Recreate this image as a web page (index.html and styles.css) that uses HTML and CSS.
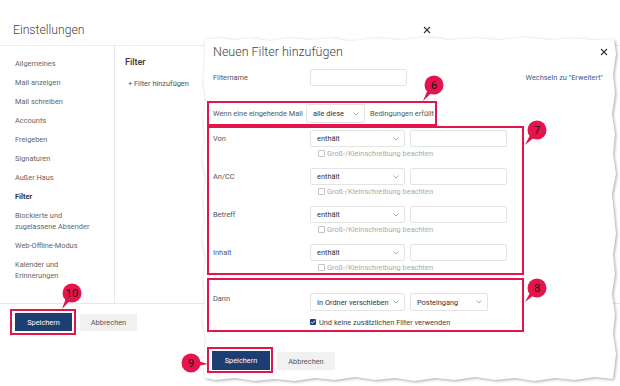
FILE: index.html
```html
<!DOCTYPE html>
<html lang="de">
<head>
<meta charset="utf-8">
<title>Einstellungen – Filter</title>
<link rel="stylesheet" href="styles.css">
</head>
<body>
<div class="page">
  <header class="top">
    <h1 class="page-title">Einstellungen</h1>
    <svg class="x-icon" viewBox="0 0 8 8"><path d="M1 1L7 7M7 1L1 7" stroke="#333" stroke-width="1.1" fill="none"/></svg>
  </header>
  <div class="main">
    <nav class="nav">
      <div class="nav-item">Allgemeines</div>
      <div class="nav-item">Mail anzeigen</div>
      <div class="nav-item">Mail schreiben</div>
      <div class="nav-item">Accounts</div>
      <div class="nav-item">Freigeben</div>
      <div class="nav-item">Signaturen</div>
      <div class="nav-item">Außer Haus</div>
      <div class="nav-item active">Filter</div>
      <div class="nav-item">Blockierte und<br>zugelassene Absender</div>
      <div class="nav-item">Web-Offline-Modus</div>
      <div class="nav-item">Kalender und<br>Erinnerungen</div>
    </nav>
    <section class="filters">
      <h2 class="filters-title">Filter</h2>
      <div class="add-link">+ Filter hinzufügen</div>
    </section>
  </div>
  <footer class="foot">
    <div class="hl-box"><div class="btn primary">Speichern</div></div>
    <div class="btn secondary">Abbrechen</div>
  </footer>
</div>

<div class="dialog">
  <svg class="paper" viewBox="0 0 420 352" width="420" height="352">
    <path fill="#fff" d="M5 5 L20 4 L35 6 L50 4 L70 7 L90 4 L110 6 L130 4 L150 7 L175 4 L200 6 L225 3 L250 6 L275 4 L300 6 L325 3 L350 6 L375 4 L395 6 L414 5 L416 20 L413 40 L415 60 L412 80 L415 100 L413 120 L416 140 L412 160 L414 180 L416 200 L413 220 L415 240 L412 260 L415 280 L413 300 L416 320 L413 345 L395 343 L375 346 L355 344 L335 347 L315 344 L295 346 L275 343 L255 346 L235 344 L215 347 L195 344 L175 346 L155 343 L135 346 L115 344 L95 347 L75 345 L55 347 L35 344 L15 346 L5 344 L3 325 L6 305 L2 285 L5 265 L3 245 L6 225 L2 205 L5 185 L3 165 L6 145 L2 125 L5 105 L3 85 L6 65 L3 45 L5 25 Z"/>
  </svg>
  <div class="dlg-body">
    <div class="dlg-head">
      <h2 class="dlg-title">Neuen Filter hinzufügen</h2>
      <svg class="x-icon" viewBox="0 0 8 8"><path d="M1 1L7 7M7 1L1 7" stroke="#333" stroke-width="1.1" fill="none"/></svg>
    </div>
    <div class="name-row">
      <span class="lbl">Filtername</span>
      <div class="input w97"></div>
      <span class="adv-link">Wechseln zu "Erweitert"</span>
    </div>
    <div class="box box-when">
      <span class="lbl lbl-when">Wenn eine eingehende Mail</span>
      <div class="sel w59"><span>alle diese</span><svg class="chev" viewBox="0 0 6 4"><path d="M0.5 0.5L3 3L5.5 0.5" fill="none" stroke="#999" stroke-width="0.8"/></svg></div>
      <span class="after">Bedingungen erfüllt</span>
    </div>
    <div class="box box-cond">
      <div class="crow">
        <div class="line"><span class="lbl">Von</span><div class="sel w95"><span>enthält</span><svg class="chev" viewBox="0 0 6 4"><path d="M0.5 0.5L3 3L5.5 0.5" fill="none" stroke="#999" stroke-width="0.8"/></svg></div><div class="input w97 ml5"></div></div>
        <div class="cb-line"><span class="cb"></span><span class="cb-text">Groß-/Kleinschreibung beachten</span></div>
      </div>
      <div class="crow">
        <div class="line"><span class="lbl">An/CC</span><div class="sel w95"><span>enthält</span><svg class="chev" viewBox="0 0 6 4"><path d="M0.5 0.5L3 3L5.5 0.5" fill="none" stroke="#999" stroke-width="0.8"/></svg></div><div class="input w97 ml5"></div></div>
        <div class="cb-line"><span class="cb"></span><span class="cb-text">Groß-/Kleinschreibung beachten</span></div>
      </div>
      <div class="crow">
        <div class="line"><span class="lbl">Betreff</span><div class="sel w95"><span>enthält</span><svg class="chev" viewBox="0 0 6 4"><path d="M0.5 0.5L3 3L5.5 0.5" fill="none" stroke="#999" stroke-width="0.8"/></svg></div><div class="input w97 ml5"></div></div>
        <div class="cb-line"><span class="cb"></span><span class="cb-text">Groß-/Kleinschreibung beachten</span></div>
      </div>
      <div class="crow last">
        <div class="line"><span class="lbl">Inhalt</span><div class="sel w95"><span>enthält</span><svg class="chev" viewBox="0 0 6 4"><path d="M0.5 0.5L3 3L5.5 0.5" fill="none" stroke="#999" stroke-width="0.8"/></svg></div><div class="input w97 ml5"></div></div>
        <div class="cb-line"><span class="cb"></span><span class="cb-text">Groß-/Kleinschreibung beachten</span></div>
      </div>
    </div>
    <div class="box box-then">
      <div class="line top-line"><span class="lbl">Dann</span><div class="sel w95 h18"><span>In Ordner verschieben</span><svg class="chev" viewBox="0 0 6 4"><path d="M0.5 0.5L3 3L5.5 0.5" fill="none" stroke="#999" stroke-width="0.8"/></svg></div><div class="sel w78 h18 ml5"><span>Posteingang</span><svg class="chev" viewBox="0 0 6 4"><path d="M0.5 0.5L3 3L5.5 0.5" fill="none" stroke="#999" stroke-width="0.8"/></svg></div></div>
      <div class="cb-line then-cb"><span class="cb checked"><svg viewBox="0 0 6 6"><path d="M1.2 3.1L2.5 4.3L4.9 1.7" fill="none" stroke="#fff" stroke-width="1"/></svg></span><span class="cb-text dark">Und keine zusätzlichen Filter verwenden</span></div>
    </div>
    <div class="dlg-buttons">
      <div class="hl-box dlg-hl"><div class="btn primary dlg-btn">Speichern</div></div>
      <div class="btn secondary dlg-btn2">Abbrechen</div>
    </div>
  </div>
</div>

<svg class="badges" viewBox="0 0 620 386" width="620" height="386">
  <g fill="#e3154c">
    <polygon points="437.3,87.3 430.7,82.7 423,101"/>
    <circle cx="434" cy="85" r="9.5"/>
    <polygon points="540.1,132.5 533.9,127.5 525,145"/>
    <circle cx="537" cy="130" r="9.5"/>
    <polygon points="540,290.6 534,285.4 525,302"/>
    <circle cx="537" cy="288" r="9.5"/>
    <polygon points="75.4,295.1 68.6,290.9 62,309"/>
    <circle cx="72" cy="293" r="9.5"/>
    <polygon points="191,359 191,367 208,364"/>
    <circle cx="191" cy="363" r="9.5"/>
  </g>
  <g class="badge-num" fill="#2a0a12" text-anchor="middle">
    <text x="434" y="89">6</text>
    <text x="537" y="134">7</text>
    <text x="537" y="292">8</text>
    <text x="72" y="297">10</text>
    <text x="191" y="367">9</text>
  </g>
</svg>
</body>
</html>
```
FILE: styles.css
```css
* { box-sizing: border-box; margin: 0; padding: 0; }
html, body { width: 620px; height: 386px; overflow: hidden; background: #fff; }
body { font-family: Roboto, "Liberation Sans", sans-serif; color: #555; position: relative; font-size: 7.4px; line-height: 11px; white-space: nowrap; }

.page { width: 620px; height: 386px; display: flex; flex-direction: column; }

.top { height: 46px; border-bottom: 1px solid #ececec; display: flex; align-items: flex-start; padding: 22px 0 0 13px; flex: none; }
.page-title { font-size: 12.2px; font-weight: 300; line-height: 16px; color: #444; width: 410px; }
.x-icon { width: 8px; height: 8px; display: block; }
.top .x-icon { margin-top: 4px; }

.main { display: flex; height: 257px; flex: none; }
.nav { width: 115px; border-right: 1px solid #e8e8e8; padding-top: 8px; }
.nav-item { padding: 4px 0 4px 15px; font-size: 7.4px; line-height: 11px; color: #666; }
.nav-item.active { font-weight: 700; color: #333; }

.filters { padding: 10px 0 0 10px; }
.filters-title { font-size: 9px; font-weight: 500; line-height: 12px; color: #333; }
.add-link { margin-top: 10px; padding-left: 3px; color: #4b5563; }

.foot { border-top: 1px solid #e8e8e8; flex: 1; display: flex; align-items: flex-start; padding: 5px 0 0 10px; }
.hl-box { border: 2px solid #e3154c; padding: 2px 2px 2px 3px; }
.btn { display: flex; align-items: center; justify-content: center; font-size: 7.4px; width: 57px; height: 18px; }
.primary { background: #1d3e72; color: #fff; }
.secondary { background: #f1f1f1; color: #555; margin-left: 4px; margin-top: 5px; height: 17px; }

/* Dialog */
.dialog { position: absolute; left: 200px; top: 34px; width: 420px; height: 352px; }
.paper { position: absolute; left: 0; top: 0; filter: drop-shadow(1px 1.5px 1.5px rgba(0,0,0,0.35)); }
.dlg-body { position: relative; width: 408px; padding: 10px 0 0 7px; }
.dlg-head { display: flex; align-items: center; justify-content: space-between; height: 16px; }
.dlg-title { font-size: 12.5px; font-weight: 300; line-height: 16px; color: #444; margin-left: 6px; }

.name-row { display: flex; align-items: center; margin-top: 9px; height: 17px; }
.name-row .lbl { margin-left: 6px; width: 97px; }
.adv-link { margin-left: auto; margin-right: 5px; color: #41608f; }

.lbl { color: #555; flex: none; width: 97px; }
.input { border: 1px solid #e4e4e4; border-radius: 2px; height: 17px; background: #fff; flex: none; }
.w97 { width: 97px; }
.ml5 { margin-left: 5px; }

.sel { display: flex; align-items: center; border: 1px solid #e4e4e4; border-radius: 2px; height: 17px; padding-left: 6px; color: #333; background: #fff; flex: none; }
.sel .chev { width: 6px; height: 4px; margin-left: auto; margin-right: 5px; display: block; }
.w95 { width: 95px; }
.w59 { width: 59px; }
.w78 { width: 78px; }
.h18 { height: 18px; }

.box { border: 2px solid #e3154c; width: 317px; }
.box-when { margin-top: 15px; width: 230px; height: 25px; display: flex; align-items: center; padding: 0 4px; }
.box-when .lbl-when { width: 93px; }
.box-when .sel { height: 19px; }
.after { margin-left: 5px; color: #555; }

.box-cond { padding: 2px 4px 0 4px; height: 149px; }
.crow { height: 38px; }
.crow.last { height: 29px; }
.line { display: flex; align-items: center; height: 17px; }
.cb-line { display: flex; align-items: center; height: 12px; padding-left: 105px; }
.cb { width: 7px; height: 7px; border: 1px solid #c4c4c4; border-radius: 1px; flex: none; background: #fff; }
.cb-text { margin-left: 2px; color: #aaa; }
.cb-text.dark { color: #444; margin-left: 3px; }

.box-then { margin-top: 3px; height: 54px; padding: 13px 4px 0 4px; }
.top-line { align-items: flex-start; height: 18px; }
.top-line .lbl { line-height: 11px; }
.then-cb { margin-top: 5px; padding-left: 97px; }
.cb.checked { width: 6px; height: 6px; border: none; background: #1d3e72; border-radius: 1px; }
.cb.checked svg { width: 6px; height: 6px; display: block; }

.dlg-buttons { display: flex; align-items: flex-start; margin-top: 15px; }
.dlg-hl { padding: 2px 1px 1px 3px; }
.dlg-btn { width: 58px; height: 19px; }
.dlg-btn2 { width: 58px; height: 18px; }

.badges { position: absolute; left: 0; top: 0; pointer-events: none; }
.badge-num { font-family: Roboto, "Liberation Sans", sans-serif; font-size: 11px; }
```
